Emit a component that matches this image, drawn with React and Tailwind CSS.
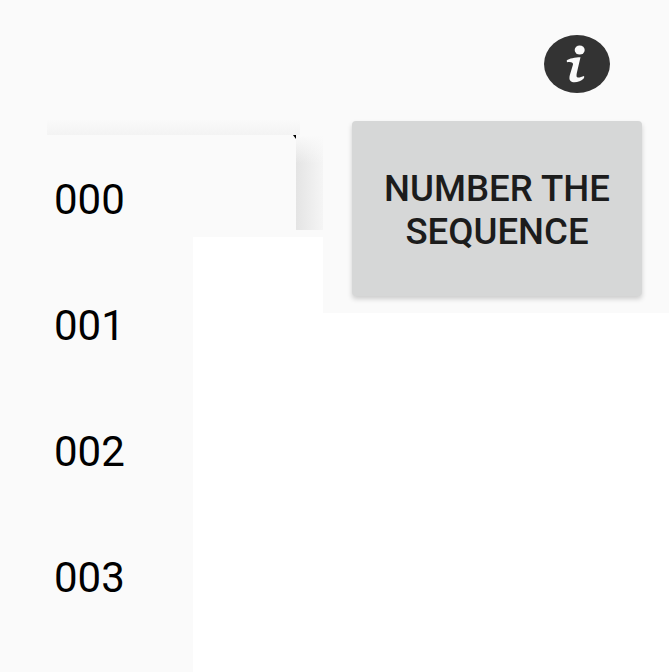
import React from 'react';

const ROWS = ['001', '002', '003'];

function InfoIcon() {
  return (
    <svg className="block w-[66px] h-[58px]" viewBox="0 0 66 58">
      <ellipse cx="33" cy="29" rx="33" ry="29" fill="#333333" />
      <ellipse cx="35.7" cy="15" rx="5" ry="4.5" fill="#fafafa" />
      <path
        d="M22.7 25.5 C25 23.5 31 22.5 36.5 22.3 L32.8 38 C32.2 41 32.5 42.5 34 42.5 C36 42.5 38 41.8 40 41 C41 43 38.5 45 35.5 46.3 C32 47.7 28 47.7 26.5 46 C25 44.5 25.3 42 26 39.5 L29 29.5 C29.4 27.5 27 26.6 23 27.3 Z"
        fill="#fafafa"
      />
    </svg>
  );
}

export default function App() {
  return (
    <div className="flex h-[672px] w-[669px] overflow-hidden bg-white font-['Roboto',sans-serif]">
      {/* Left side: list */}
      <div className="w-[323px] shrink-0">
        <div className="h-[237px] bg-[#fafafa] pt-[120px]">
          <div className="ml-[47px] h-[15px] w-[253px] bg-gradient-to-b from-[#fafafa] to-[#f3f3f3]"></div>
          <div className="flex items-start">
            <div className="relative ml-[47px] h-[102px] w-[249px] pl-[7px] pt-[44px] text-[42px] leading-[42px] text-black">
              <span className="absolute right-0 top-0 h-[4px] w-[3px] bg-black [clip-path:polygon(100%_0,100%_100%,0_0)]"></span>
              000
            </div>
            <div className="h-[95px] w-[27px] bg-[linear-gradient(to_bottom,#fafafa,transparent_30%),linear-gradient(to_right,#e4e4e4,#f5f5f5)]"></div>
          </div>
        </div>
        <div className="h-[435px] w-[193px] bg-[#fafafa] pt-[26px]">
          {ROWS.map((row) => (
            <div key={row} className="flex h-[126px] items-center pl-[54px] text-[42px] leading-none text-black">
              {row}
            </div>
          ))}
        </div>
      </div>

      {/* Right side: info + button */}
      <div className="h-[313px] flex-1 bg-[#fafafa] px-[29px]">
        <div className="flex justify-end pt-[35px] pr-[32px]">
          <InfoIcon />
        </div>
        <button className="mt-[28px] flex h-[175px] w-[290px] items-center justify-center rounded-[4px] bg-[#d6d7d7] pt-[3px] text-center text-[36.6px] font-medium leading-[43px] text-[#1c1c1c] shadow-[0_3px_5px_rgba(0,0,0,0.18)]">
          NUMBER THE
          <br />
          SEQUENCE
        </button>
      </div>
    </div>
  );
}
